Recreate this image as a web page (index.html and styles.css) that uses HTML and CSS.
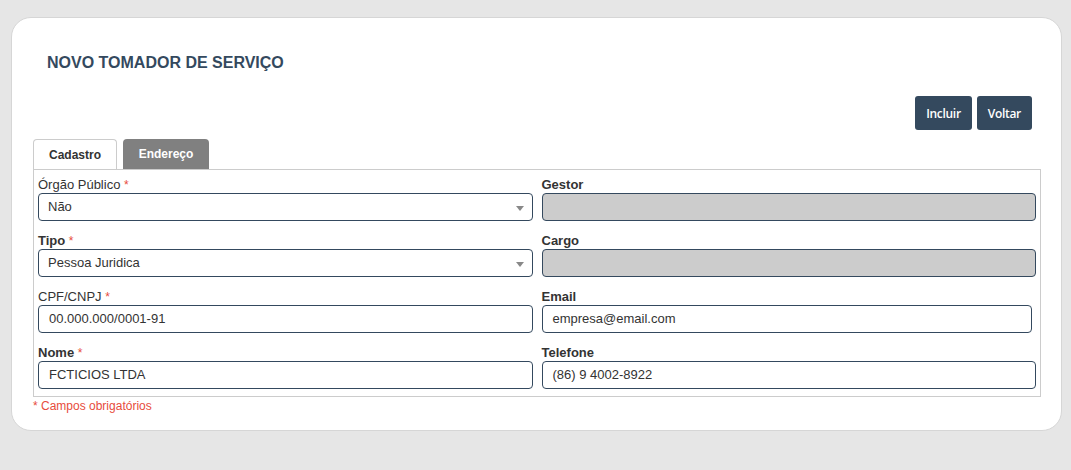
FILE: index.html
```html
<!DOCTYPE html>
<html lang="pt-BR">
<head>
<meta charset="utf-8">
<title>Novo Tomador de Serviço</title>
<link rel="stylesheet" href="styles.css">
</head>
<body>
<div class="card">
  <h1 class="title">NOVO TOMADOR DE SERVIÇO</h1>
  <div class="actions">
    <button class="btn" type="button">Incluir</button>
    <button class="btn" type="button">Voltar</button>
  </div>
  <div class="tabs">
    <div class="tab active">Cadastro</div>
    <div class="tab">Endereço</div>
  </div>
  <div class="panel">
    <div class="col">
      <div class="field">
        <label class="lbl thin">Órgão Público <span class="req">*</span></label>
        <div class="select"><span>Não</span><i class="caret"></i></div>
      </div>
      <div class="field">
        <label class="lbl">Tipo <span class="req">*</span></label>
        <div class="select"><span>Pessoa Juridica</span><i class="caret"></i></div>
      </div>
      <div class="field">
        <label class="lbl thin">CPF/CNPJ <span class="req">*</span></label>
        <div class="input">00.000.000/0001-91</div>
      </div>
      <div class="field">
        <label class="lbl">Nome <span class="req">*</span></label>
        <div class="input">FCTICIOS LTDA</div>
      </div>
    </div>
    <div class="col">
      <div class="field">
        <label class="lbl">Gestor</label>
        <div class="input disabled"></div>
      </div>
      <div class="field">
        <label class="lbl">Cargo</label>
        <div class="input disabled"></div>
      </div>
      <div class="field">
        <label class="lbl">Email</label>
        <div class="input short">empresa@email.com</div>
      </div>
      <div class="field">
        <label class="lbl">Telefone</label>
        <div class="input">(86) 9 4002-8922</div>
      </div>
    </div>
  </div>
  <p class="note">* Campos obrigatórios</p>
</div>
</body>
</html>
```

FILE: styles.css
```css
html, body {
  margin: 0;
  padding: 0;
  background: #e6e6e6;
}
body {
  padding: 17px 9px 0 11px;
  font-family: "Liberation Sans", Arial, sans-serif;
  color: #333;
}
.card {
  background: #fff;
  border: 1px solid #d6d6d6;
  border-radius: 20px;
  padding: 0 20px 19px 21px;
  box-sizing: border-box;
  height: 414px;
}
.title {
  margin: 0;
  padding: 36px 0 0 14px;
  font-size: 16px;
  line-height: 18px;
  font-weight: bold;
  color: #34495e;
}
.actions {
  display: flex;
  justify-content: flex-end;
  gap: 5px;
  margin-top: 24px;
  padding-right: 9px;
}
.btn {
  height: 34px;
  padding: 0 11px;
  border: none;
  border-radius: 3px;
  background: #34495e;
  color: #fff;
  font-family: "Open Sans", sans-serif;
  font-weight: 600;
  font-size: 12px;
  letter-spacing: -0.3px;
}
.tabs {
  display: flex;
  gap: 6px;
  margin-top: 9px;
}
.tab {
  height: 30px;
  line-height: 30px;
  box-sizing: border-box;
  font-size: 12px;
  font-weight: bold;
  color: #fff;
  background: #808080;
  border-radius: 4px 4px 0 0;
  width: 86px;
  text-align: center;
}
.tab.active {
  background: #fff;
  color: #333;
  border: 1px solid #ccc;
  border-bottom: none;
  width: 84px;
}
.panel {
  display: flex;
  gap: 9px;
  border: 1px solid #ccc;
  padding: 7px 4px 7px 4px;
}
.col {
  flex: 1;
  display: flex;
  flex-direction: column;
  gap: 12px;
}
.field {
  display: flex;
  flex-direction: column;
}
.lbl {
  font-size: 13px;
  line-height: 16px;
  font-weight: bold;
  color: #333;
}
.lbl.thin {
  font-weight: normal;
}
.req {
  color: #e74c3c;
  font-weight: normal;
  font-size: 12px;
}
.input, .select {
  height: 28px;
  box-sizing: border-box;
  border: 1px solid #34495e;
  border-radius: 4px;
  padding: 0 10px;
  font-size: 13px;
  line-height: 26px;
  color: #333;
  background: #fff;
}
.select {
  display: flex;
  justify-content: space-between;
  align-items: center;
  padding: 0 8px 0 9px;
}
.caret {
  width: 0;
  height: 0;
  border-left: 4px solid transparent;
  border-right: 4px solid transparent;
  border-top: 5px solid #888;
  margin-top: 2px;
}
.input.disabled {
  background: #cccccc;
}
.input.short {
  margin-right: 4px;
}
.note {
  margin: 2px 0 0 0;
  font-size: 12px;
  line-height: 14px;
  color: #e74c3c;
}
```
